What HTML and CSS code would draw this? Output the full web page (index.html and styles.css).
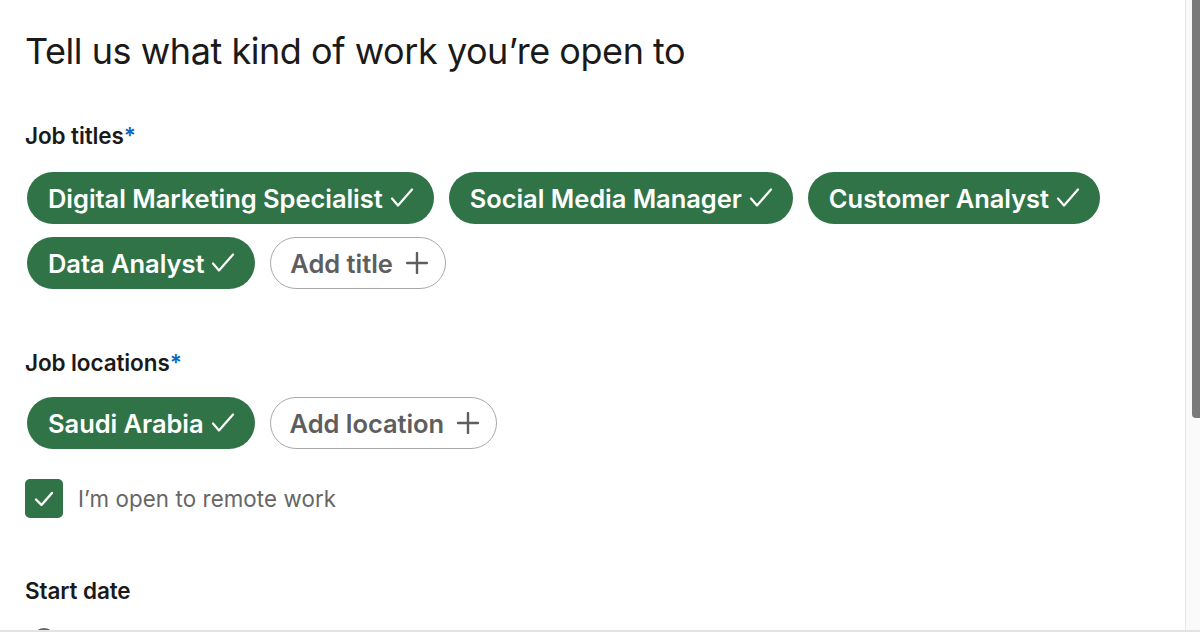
FILE: index.html
```html
<!DOCTYPE html>
<html>
<head>
<meta charset="utf-8">
<link rel="stylesheet" href="styles.css">
</head>
<body>
<div class="window">
  <main class="page">
    <h1 class="title">Tell us what kind of work you’re open to</h1>

    <section class="field field-titles">
      <div class="label">Job titles<span class="req">*</span></div>
      <div class="pills">
        <span class="pill on">Digital Marketing Specialist <svg class="tick" width="24" height="20" viewBox="0 0 24 20"><path d="M2 10.5 L8 17.5 L22 1.5" fill="none" stroke="#fff" stroke-width="2.2" stroke-linecap="round" stroke-linejoin="round"/></svg></span>
        <span class="pill on">Social Media Manager <svg class="tick" width="24" height="20" viewBox="0 0 24 20"><path d="M2 10.5 L8 17.5 L22 1.5" fill="none" stroke="#fff" stroke-width="2.2" stroke-linecap="round" stroke-linejoin="round"/></svg></span>
        <span class="pill on">Customer Analyst <svg class="tick" width="24" height="20" viewBox="0 0 24 20"><path d="M2 10.5 L8 17.5 L22 1.5" fill="none" stroke="#fff" stroke-width="2.2" stroke-linecap="round" stroke-linejoin="round"/></svg></span>
        <span class="pill on">Data Analyst <svg class="tick" width="24" height="20" viewBox="0 0 24 20"><path d="M2 10.5 L8 17.5 L22 1.5" fill="none" stroke="#fff" stroke-width="2.2" stroke-linecap="round" stroke-linejoin="round"/></svg></span>
        <span class="pill add">Add title <svg class="plus" width="22" height="22" viewBox="0 0 22 22"><path d="M11 1 V21 M1 11 H21" fill="none" stroke="#5e5e5e" stroke-width="2.4" stroke-linecap="round"/></svg></span>
      </div>
    </section>

    <section class="field field-locations">
      <div class="label">Job locations<span class="req">*</span></div>
      <div class="pills">
        <span class="pill on">Saudi Arabia <svg class="tick" width="24" height="20" viewBox="0 0 24 20"><path d="M2 10.5 L8 17.5 L22 1.5" fill="none" stroke="#fff" stroke-width="2.2" stroke-linecap="round" stroke-linejoin="round"/></svg></span>
        <span class="pill add">Add location <svg class="plus" width="22" height="22" viewBox="0 0 22 22"><path d="M11 1 V21 M1 11 H21" fill="none" stroke="#5e5e5e" stroke-width="2.4" stroke-linecap="round"/></svg></span>
      </div>
    </section>

    <label class="check-row">
      <span class="box">
        <svg width="24" height="24" viewBox="0 0 24 24"><path d="M4 12.5 L9.5 18 L20 6" fill="none" stroke="#fff" stroke-width="2.4" stroke-linecap="round" stroke-linejoin="round"/></svg>
      </span>
      <span class="check-text">I’m open to remote work</span>
    </label>

    <section class="field field-start">
      <div class="label">Start date</div>
      <div class="radio"></div>
    </section>
  </main>
  <div class="scrollbar"><div class="thumb"></div></div>
</div>
</body>
</html>
```

FILE: styles.css
```css
html, body {
  margin: 0;
  padding: 0;
  background: #fff;
}
body {
  font-family: Inter, "Noto Sans", "Liberation Sans", sans-serif;
  color: #191919;
  width: 1200px;
  height: 632px;
  overflow: hidden;
}
.window {
  display: flex;
  height: 630px;
  border-bottom: 2px solid #e3e3e3;
}
.page {
  flex: 1;
  padding: 25px 0 0 25px;
  overflow: hidden;
  box-sizing: border-box;
}
.title {
  margin: 0;
  font-size: 36px;
  font-weight: 400;
  line-height: 52px;
  letter-spacing: -0.45px;
  color: #1a1a1a;
}
.field-titles { margin-top: 46px; }
.label {
  font-size: 22.5px;
  font-weight: 600;
  line-height: 26px;
  color: #1a1a1a;
  letter-spacing: -0.1px;
}
.req { color: #0a66c2; }
.pills {
  display: flex;
  flex-wrap: wrap;
  column-gap: 15px;
  row-gap: 13px;
  margin-top: 23px;
  padding-left: 2px;
  width: 1130px;
}
.pill {
  display: inline-flex;
  align-items: center;
  height: 52px;
  box-sizing: border-box;
  padding: 0 20px 0 21px;
  border-radius: 26px;
  font-size: 25.5px;
  font-weight: 600;
  letter-spacing: -0.05px;
  white-space: nowrap;
}
.pill.on {
  background: #2f7347;
  color: #fff;
}
.pill.add {
  border: 1.5px solid #a9a9a9;
  color: #5e5e5e;
  background: #fff;
  padding: 0 17px 0 19px;
}
.tick {
  margin-left: 7px;
  flex-shrink: 0;
}
.plus {
  margin-left: 13px;
  flex-shrink: 0;
}
.field-locations { margin-top: 61px; }
.field-locations .pills { margin-top: 21px; }
.check-row {
  display: flex;
  align-items: center;
  margin-top: 30px;
}
.box {
  width: 38px;
  height: 39px;
  border-radius: 5px;
  background: #2f7347;
  display: flex;
  align-items: center;
  justify-content: center;
}
.check-text {
  margin-left: 15px;
  font-size: 22.3px;
  color: #666;
  letter-spacing: 0.1px;
}
.field-start { margin-top: 60px; }
.radio {
  width: 18px;
  height: 18px;
  margin: 24px 0 0 8px;
  border: 2px solid #666;
  border-radius: 50%;
}
.scrollbar {
  width: 14px;
  border-left: 1px solid #e6e6e6;
  background: #fafafa;
  display: flex;
  justify-content: flex-end;
  flex-shrink: 0;
}
.thumb {
  width: 8px;
  height: 418px;
  background: #7a7a7a;
  border-radius: 0 0 0 4px;
}
```
